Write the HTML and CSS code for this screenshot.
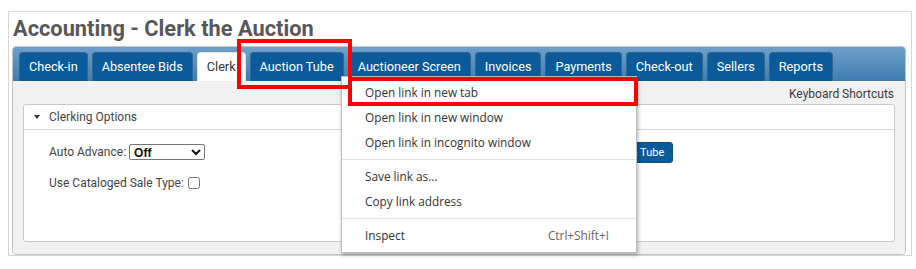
FILE: index.html
```html
<!DOCTYPE html>
<html lang="en">
<head>
  <meta charset="UTF-8" />
  <title>Accounting - Clerk the Auction</title>
  <link rel="stylesheet" href="styles.css">
</head>
<body>

  <div class="frame">
    <h1>Accounting - Clerk the Auction</h1>

    <div class="tabs">
      <ul class="tabbar">
        <li>Check-in</li>
        <li>Absentee Bids</li>
        <li class="active">Clerk</li>
        <li>Auction Tube</li>
        <li>Auctioneer Screen</li>
        <li>Invoices</li>
        <li>Payments</li>
        <li>Check-out</li>
        <li>Sellers</li>
        <li>Reports</li>
      </ul>

      <div class="panel">
        <div class="shortcuts">Keyboard Shortcuts</div>
        <div class="accordion">
          <div class="acc-head"><span class="caret"></span>Clerking Options</div>
          <div class="acc-body">
            <div class="row">
              <label>Auto Advance:</label>
              <select class="sel"><option>Off</option></select>
              <button class="btn">Auction Tube</button>
            </div>
            <div class="row">
              <label>Use Cataloged Sale Type:</label>
              <input type="checkbox" class="chk">
            </div>
          </div>
        </div>
      </div>
    </div>
  </div>

  <!-- browser context menu over the page -->
  <div class="menu">
    <div class="item">Open link in new tab</div>
    <div class="item">Open link in new window</div>
    <div class="item">Open link in incognito window</div>
    <div class="sep"></div>
    <div class="item">Save link as...</div>
    <div class="item">Copy link address</div>
    <div class="sep"></div>
    <div class="item"><span>Inspect</span><span class="key">Ctrl+Shift+I</span></div>
  </div>

  <div class="mark mark-tab"></div>
  <div class="mark mark-item"></div>

</body>
</html>
```

FILE: styles.css
```css
* {
  margin: 0; padding: 0; box-sizing: border-box;
}

body {
  background: #fff;
  font-family: Roboto, 'Liberation Sans', sans-serif;
  color: #444;
  position: relative;
  width: 916px;
  height: 269px;
  overflow: hidden;
}

.frame {
  position: absolute;
  left: 8px;
  top: 11px;
  width: 904px;
  height: 245px;
  border: 1px solid #d6d6d6;
  padding: 5px 0 0 3px;
}

h1 {
  font-size: 21.8px;
  line-height: 24px;
  font-weight: 700;
  color: #58585a;
  padding-left: 1px;
  margin-bottom: 5px;
}

.tabs {
  width: 894px;
  height: 209px;
  border: 1px solid #c3c3c3;
  border-radius: 4px;
  overflow: hidden;
  display: flex;
  flex-direction: column;
}

.tabbar {
  list-style: none;
  display: flex;
  gap: 4px;
  height: 34px;
  flex-shrink: 0;
  padding: 5px 0 0 6px;
  background: linear-gradient(#6fa0c9, #3f7cb0);
}

.tabbar li {
  flex-shrink: 0;
  white-space: nowrap;
  background: #0b5a99;
  color: #fff;
  font-size: 12.7px;
  line-height: 28px;
  padding: 0 9px;
  border: 1px solid #2f6795;
  border-bottom: none;
  border-radius: 4px 4px 0 0;
}

.tabbar li.active {
  background: #fff;
  color: #333;
  border-color: #e2e2e2;
}

.panel {
  flex: 1;
  background: #f1f1f1;
  padding: 4px 10px 0 10px;
}

.shortcuts {
  text-align: right;
  font-size: 12px;
  line-height: 19px;
  color: #3a3a3a;
  padding-right: 1px;
}

.accordion {
  background: #fff;
  border: 1px solid #c8c8c8;
  border-radius: 3px;
  height: 138px;
}

.acc-head {
  height: 25px;
  border-bottom: 1px solid #d6d6d6;
  font-size: 12px;
  line-height: 24px;
  color: #444;
  padding-left: 25px;
  position: relative;
  display: flex;
  align-items: center;
}

.caret {
  position: absolute;
  left: 10px;
  top: 10px;
  border-left: 3.5px solid transparent;
  border-right: 3.5px solid transparent;
  border-top: 4px solid #333;
}

.acc-body {
  padding: 13px 0 0 25px;
}

.row {
  display: flex;
  align-items: center;
  height: 18px;
  margin-bottom: 13px;
  font-size: 12px;
  color: #444;
  white-space: nowrap;
}

.row label {
  margin-right: 3px;
}

.sel {
  width: 76px;
  height: 16px;
  font-family: 'Liberation Sans', sans-serif;
  font-size: 12px;
  font-weight: 700;
  color: #111;
  border: 1px solid #767676;
  border-radius: 2px;
  background: #fff;
}

.btn {
  margin-left: 386px;
  background: #0b5a99;
  color: #fff;
  border: 1px solid #0a4f87;
  border-radius: 3px;
  font-family: Roboto, sans-serif;
  font-size: 11px;
  height: 21px;
  padding: 0 8px;
}

.chk {
  width: 12px;
  height: 12px;
  margin-left: 1px;
}

.menu {
  position: absolute;
  left: 341px;
  top: 76px;
  width: 296px;
  height: 177px;
  background: #fff;
  border: 1px solid #bdbdbd;
  box-shadow: 1px 2px 4px rgba(0,0,0,0.3);
  padding-top: 3px;
  font-family: 'Open Sans', 'Noto Sans', sans-serif;
  font-size: 11.8px;
  color: #333;
}

.menu .item {
  height: 25px;
  line-height: 25px;
  padding: 0 27px 0 23px;
  display: flex;
  justify-content: space-between;
}

.menu .key {
  color: #666;
}

.menu .sep {
  height: 1px;
  background: #e3e3e3;
  margin: 4px 0;
}

.mark {
  position: absolute;
  border: 4px solid #f00;
}

.mark-tab {
  left: 237px;
  top: 39px;
  width: 115px;
  height: 50px;
}

.mark-item {
  left: 348px;
  top: 77px;
  width: 290px;
  height: 29px;
}
```
